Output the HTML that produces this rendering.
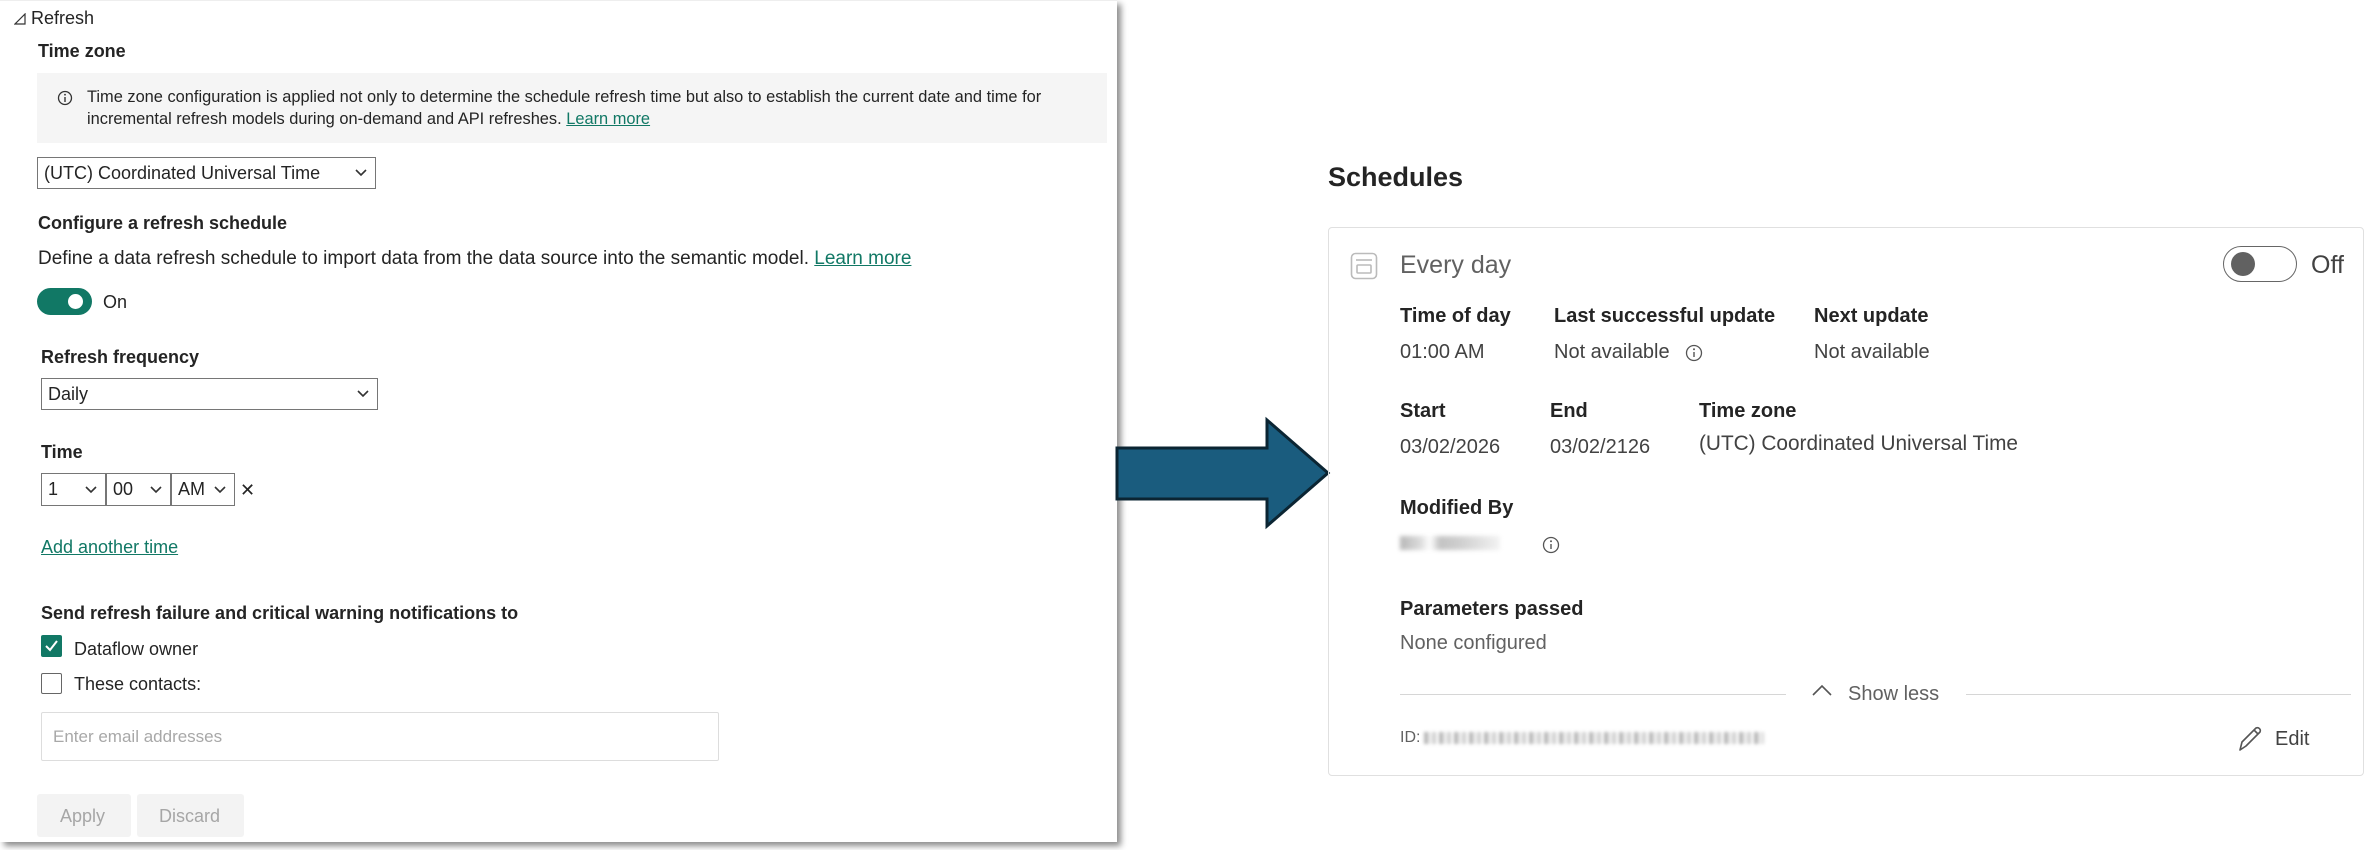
<!DOCTYPE html>
<html><head><meta charset="utf-8"><style>
*{box-sizing:border-box;margin:0;padding:0}
body{width:2371px;height:850px;background:#fff;position:relative;overflow:hidden;font-family:"Liberation Sans",sans-serif;color:#242424}
.a{position:absolute;white-space:nowrap;line-height:1}
.b{font-weight:bold}
.sel{position:absolute;border:1px solid #767676;background:#fff;font-size:18px;padding-left:6px;display:flex;align-items:center}
.sel svg{position:absolute;right:8px;top:50%;margin-top:-4px}
.lnk{color:#117865;text-decoration:underline}
.cap{font-size:20px;font-weight:bold;color:#242424}
.val{font-size:20px;color:#424242}
</style></head><body>
<div style="position:absolute;left:0;top:0;width:1117px;height:842px;background:#fff;border-top:1px solid #eee;box-shadow:4px 4px 6px rgba(0,0,0,.45)"></div>
<svg style="position:absolute;left:14px;top:13px" width="12" height="12"><path d="M1 11H11V1Z" fill="none" stroke="#333" stroke-width="1.2"/></svg>
<div class="a" style="left:31px;top:9px;font-size:18px">Refresh</div>
<div class="a b" style="left:38px;top:42px;font-size:18px">Time zone</div>
<div style="position:absolute;left:37px;top:73px;width:1070px;height:70px;background:#f5f5f5"></div>
<svg style="position:absolute;left:57px;top:90px" width="16" height="16"><circle cx="8" cy="8" r="6.5" fill="none" stroke="#333" stroke-width="1.3"/><line x1="8" y1="7" x2="8" y2="12" stroke="#333" stroke-width="1.4"/><circle cx="8" cy="4.7" r="0.9" fill="#333"/></svg>
<div class="a" style="left:87px;top:89px;font-size:16.4px">Time zone configuration is applied not only to determine the schedule refresh time but also to establish the current date and time for</div>
<div class="a" style="left:87px;top:111px;font-size:16.4px">incremental refresh models during on-demand and API refreshes. <span class="lnk">Learn more</span></div>
<div class="sel" style="left:37px;top:157px;width:339px;height:32px">(UTC) Coordinated Universal Time<svg width="12" height="8"><path d="M1 1l5 5 5-5" fill="none" stroke="#333" stroke-width="1.6"/></svg></div>
<div class="a b" style="left:38px;top:214px;font-size:18px">Configure a refresh schedule</div>
<div class="a" style="left:38px;top:249px;font-size:19px">Define a data refresh schedule to import data from the data source into the semantic model. <span class="lnk">Learn more</span></div>
<div style="position:absolute;left:37px;top:288px;width:55px;height:27px;border-radius:14px;background:#117865"></div>
<div style="position:absolute;left:68px;top:294px;width:15px;height:15px;border-radius:50%;background:#fff"></div>
<div class="a" style="left:103px;top:293px;font-size:18px">On</div>
<div class="a b" style="left:41px;top:348px;font-size:18px">Refresh frequency</div>
<div class="sel" style="left:41px;top:378px;width:337px;height:32px">Daily<svg width="12" height="8"><path d="M1 1l5 5 5-5" fill="none" stroke="#333" stroke-width="1.6"/></svg></div>
<div class="a b" style="left:41px;top:443px;font-size:18px">Time</div>
<div class="sel" style="left:41px;top:473px;width:65px;height:33px">1<svg width="12" height="8"><path d="M1 1l5 5 5-5" fill="none" stroke="#333" stroke-width="1.6"/></svg></div>
<div class="sel" style="left:106px;top:473px;width:65px;height:33px">00<svg width="12" height="8"><path d="M1 1l5 5 5-5" fill="none" stroke="#333" stroke-width="1.6"/></svg></div>
<div class="sel" style="left:171px;top:473px;width:64px;height:33px">AM<svg width="12" height="8"><path d="M1 1l5 5 5-5" fill="none" stroke="#333" stroke-width="1.6"/></svg></div>
<div class="a" style="left:240px;top:481px;font-size:18px">✕</div>
<div class="a lnk" style="left:41px;top:538px;font-size:18px">Add another time</div>
<div class="a b" style="left:41px;top:604px;font-size:18px">Send refresh failure and critical warning notifications to</div>
<div style="position:absolute;left:41px;top:635px;width:21px;height:22px;background:#117865;border-radius:2px"></div>
<svg style="position:absolute;left:43px;top:638px" width="17" height="16"><path d="M3 8l4 4 7-9" fill="none" stroke="#fff" stroke-width="2"/></svg>
<div class="a" style="left:74px;top:640px;font-size:18px">Dataflow owner</div>
<div style="position:absolute;left:41px;top:673px;width:21px;height:21px;border:1px solid #666;border-radius:2px"></div>
<div class="a" style="left:74px;top:675px;font-size:18px">These contacts:</div>
<div style="position:absolute;left:41px;top:712px;width:678px;height:49px;border:1px solid #ddd;border-radius:2px"></div>
<div class="a" style="left:53px;top:728px;font-size:17px;color:#a8a8a8">Enter email addresses</div>
<div style="position:absolute;left:37px;top:794px;width:94px;height:43px;background:#f3f3f3;border-radius:3px"></div>
<div class="a" style="left:60px;top:807px;font-size:18px;color:#a6a6a6">Apply</div>
<div style="position:absolute;left:137px;top:794px;width:107px;height:43px;background:#f3f3f3;border-radius:3px"></div>
<div class="a" style="left:159px;top:807px;font-size:18px;color:#a6a6a6">Discard</div>
<svg style="position:absolute;left:1110px;top:415px" width="225" height="116"><path d="M7 33H157V5L218 58 157 111V84H7Z" fill="#1a5c7e" stroke="#0b2533" stroke-width="3"/></svg>
<div class="a" style="left:1328px;top:164px;font-size:27px;font-weight:bold;color:#242424">Schedules</div>
<div style="position:absolute;left:1328px;top:227px;width:1036px;height:549px;border:1px solid #e0e0e0;border-radius:4px"></div>
<svg style="position:absolute;left:1350px;top:252px" width="28" height="28"><rect x="1.5" y="1.5" width="25" height="25" rx="4" fill="none" stroke="#bbb" stroke-width="1.6"/><line x1="6" y1="8" x2="22" y2="8" stroke="#bbb" stroke-width="1.6"/><rect x="7" y="13" width="14" height="8" rx="1" fill="none" stroke="#bbb" stroke-width="1.6"/></svg>
<div class="a" style="left:1400px;top:253px;font-size:25px;color:#616161">Every day</div>
<div style="position:absolute;left:2223px;top:246px;width:74px;height:36px;border:1.5px solid #666;border-radius:18px"></div>
<div style="position:absolute;left:2231px;top:252px;width:24px;height:24px;border-radius:50%;background:#616161"></div>
<div class="a" style="left:2311px;top:253px;font-size:25px;color:#424242">Off</div>
<div class="a cap" style="left:1400px;top:306px">Time of day</div>
<div class="a cap" style="left:1554px;top:306px">Last successful update</div>
<div class="a cap" style="left:1814px;top:306px">Next update</div>
<div class="a val" style="left:1400px;top:342px">01:00 AM</div>
<div class="a val" style="left:1554px;top:342px">Not available</div>
<svg style="position:absolute;left:1684px;top:343px" width="20" height="20"><circle cx="10" cy="10" r="7.5" fill="none" stroke="#555" stroke-width="1.3"/><line x1="10" y1="9" x2="10" y2="14" stroke="#555" stroke-width="1.4"/><circle cx="10" cy="6.3" r="1" fill="#555"/></svg>
<div class="a val" style="left:1814px;top:342px">Not available</div>
<div class="a cap" style="left:1400px;top:401px">Start</div>
<div class="a cap" style="left:1550px;top:401px">End</div>
<div class="a cap" style="left:1699px;top:401px">Time zone</div>
<div class="a val" style="left:1400px;top:437px">03/02/2026</div>
<div class="a val" style="left:1550px;top:437px">03/02/2126</div>
<div class="a val" style="left:1699px;top:434px;font-size:20.8px">(UTC) Coordinated Universal Time</div>
<div class="a cap" style="left:1400px;top:498px">Modified By</div>
<div style="position:absolute;left:1400px;top:536px;width:100px;height:14px;filter:blur(2px);background:linear-gradient(90deg,#999 0,#ccc 20%,#fff 30%,#aaa 40%,#bbb 60%,#eee 100%);opacity:.7"></div>
<svg style="position:absolute;left:1541px;top:535px" width="20" height="20"><circle cx="10" cy="10" r="7.5" fill="none" stroke="#555" stroke-width="1.3"/><line x1="10" y1="9" x2="10" y2="14" stroke="#555" stroke-width="1.4"/><circle cx="10" cy="6.3" r="1" fill="#555"/></svg>
<div class="a cap" style="left:1400px;top:599px">Parameters passed</div>
<div class="a val" style="left:1400px;top:633px;color:#616161">None configured</div>
<div style="position:absolute;left:1400px;top:694px;width:386px;height:1px;background:#d6d6d6"></div>
<div style="position:absolute;left:1966px;top:694px;width:385px;height:1px;background:#d6d6d6"></div>
<svg style="position:absolute;left:1810px;top:682px" width="24" height="16"><path d="M3 13L12 4l9 9" fill="none" stroke="#555" stroke-width="1.6"/></svg>
<div class="a" style="left:1848px;top:684px;font-size:20px;color:#616161">Show less</div>
<div class="a" style="left:1400px;top:730px;font-size:16px;color:#616161">ID:</div>
<div style="position:absolute;left:1424px;top:732px;width:340px;height:12px;filter:blur(1.5px);background:repeating-linear-gradient(90deg,#888 0 4px,#ddd 4px 9px,#aaa 9px 12px,#fff 12px 15px);opacity:.6"></div>
<svg style="position:absolute;left:2236px;top:722px" width="30" height="32"><path d="M4 28l2-8L20 6a3 3 0 0 1 4 4L10 24Z M18 8l4 4" fill="none" stroke="#555" stroke-width="1.6" stroke-linejoin="round"/></svg>
<div class="a" style="left:2275px;top:729px;font-size:20px;color:#424242">Edit</div>
</body></html>
